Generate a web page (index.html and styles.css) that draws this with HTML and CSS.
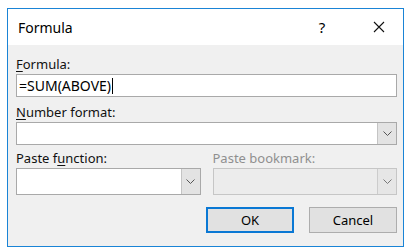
FILE: index.html
```html
<!DOCTYPE html>
<html lang="en">
<head>
    <meta charset="UTF-8">
    <title>Formula</title>
    <link rel="stylesheet" href="styles.css">
</head>
<body>

    <div class="dialog">
        <div class="titlebar">
            <span class="title">Formula</span>
            <span class="help">?</span>
            <span class="close">
                <svg width="12" height="12" viewBox="0 0 12 12">
                    <path d="M1 1 L11 11 M11 1 L1 11" stroke="#111" stroke-width="1.1" fill="none"/>
                </svg>
            </span>
        </div>

        <div class="dialog-body">
            <label class="field-label"><u>F</u>ormula:</label>
            <div class="textbox">=SUM(ABOVE)<span class="caret"></span></div>

            <label class="field-label"><u>N</u>umber format:</label>
            <div class="combo">
                <div class="combo-value"></div>
                <div class="combo-btn">
                    <svg width="9" height="5" viewBox="0 0 9 5"><path d="M0.5 0.5 L4.5 4.5 L8.5 0.5" stroke="#555" stroke-width="1" fill="none"/></svg>
                </div>
            </div>

            <div class="two-col">
                <div class="col">
                    <label class="field-label">Paste f<u>u</u>nction:</label>
                    <div class="combo tall">
                        <div class="combo-value"></div>
                        <div class="combo-btn">
                            <svg width="9" height="5" viewBox="0 0 9 5"><path d="M0.5 0.5 L4.5 4.5 L8.5 0.5" stroke="#555" stroke-width="1" fill="none"/></svg>
                        </div>
                    </div>
                </div>
                <div class="col disabled">
                    <label class="field-label">Paste bookmark:</label>
                    <div class="combo tall">
                        <div class="combo-value"></div>
                        <div class="combo-btn">
                            <svg width="9" height="5" viewBox="0 0 9 5"><path d="M0.5 0.5 L4.5 4.5 L8.5 0.5" stroke="#777" stroke-width="1" fill="none"/></svg>
                        </div>
                    </div>
                </div>
            </div>

            <div class="buttons">
                <button class="btn btn-default">OK</button>
                <button class="btn">Cancel</button>
            </div>
        </div>
    </div>

</body>
</html>
```

FILE: styles.css
```css
body {
    margin: 0;
    background-color: #fff;
    font-family: 'Noto Sans', 'Open Sans', sans-serif;
    color: #000;
}

.dialog {
    margin: 8px 0 0 7px;
    width: 397px;
    height: 239px;
    box-sizing: border-box;
    border: 1px solid #1a84d6;
    background-color: #f0f0f0;
}

.titlebar {
    display: flex;
    align-items: center;
    height: 36px;
    background-color: #fff;
    padding-left: 10px;
}

.title {
    font-size: 14px;
}

.help {
    margin-left: auto;
    width: 20px;
    text-align: center;
    font-size: 15px;
}

.close {
    width: 48px;
    margin-left: 23px;
    display: flex;
    justify-content: center;
    align-items: center;
}

.dialog-body {
    padding: 10px 6px 0 8px;
}

.field-label {
    display: block;
    font-size: 13px;
    line-height: 18px;
    color: #111;
}

.field-label u {
    text-underline-offset: 2px;
}

.textbox {
    margin-top: 1px;
    margin-bottom: 6px;
    height: 23px;
    box-sizing: border-box;
    border: 1px solid #a9a9a9;
    background-color: #fff;
    font-size: 14px;
    line-height: 21px;
    padding-left: 2px;
    display: flex;
    align-items: center;
}

.caret {
    display: inline-block;
    width: 1px;
    height: 16px;
    background-color: #000;
    margin-left: 1px;
}

.combo {
    margin-top: 1px;
    height: 23px;
    box-sizing: border-box;
    border: 1px solid #a9a9a9;
    background-color: #fff;
    display: flex;
}

.combo.tall {
    height: 27px;
}

.combo-value {
    flex: 1;
}

.combo-btn {
    width: 19px;
    box-sizing: border-box;
    background-color: #e3e3e3;
    border-left: 1px solid #c4c4c4;
    display: flex;
    justify-content: center;
    align-items: center;
}

.two-col {
    display: grid;
    grid-template-columns: 1fr 1fr;
    column-gap: 12px;
    margin-top: 4px;
}

.disabled .field-label {
    color: #8f8f8f;
}

.disabled .combo {
    background-color: #ececec;
    border-color: #c6c6c6;
}

.disabled .combo-btn {
    background-color: #e6e6e6;
    border-left-color: #cccccc;
}

.buttons {
    display: flex;
    justify-content: flex-end;
    gap: 15px;
    margin-top: 12px;
}

.btn {
    width: 88px;
    height: 26px;
    box-sizing: border-box;
    font-family: 'Noto Sans', 'Open Sans', sans-serif;
    font-size: 13px;
    color: #000;
    background-color: #e1e1e1;
    border: 1px solid #adadad;
    padding: 0;
}

.btn-default {
    border: 2px solid #0a78d4;
}
```
